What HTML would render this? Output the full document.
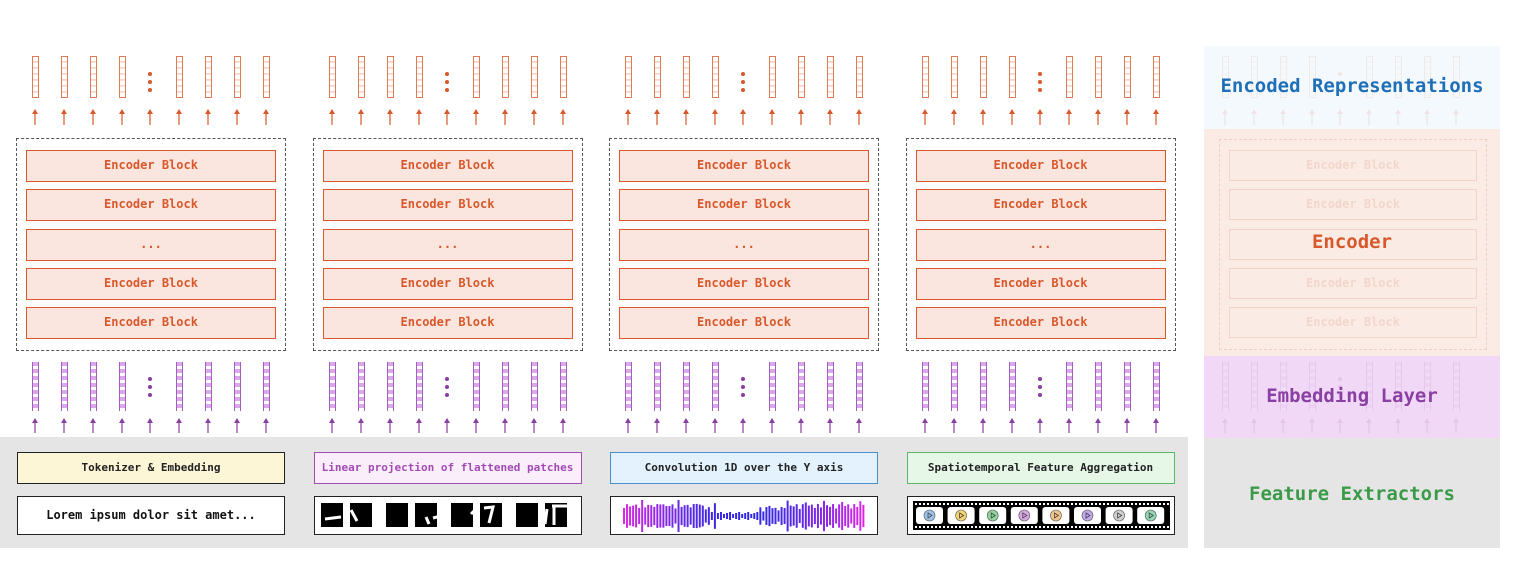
<!DOCTYPE html>
<html><head><meta charset="utf-8">
<style>
*{margin:0;padding:0;box-sizing:border-box}
body{width:1527px;height:563px;background:#fff;position:relative;overflow:hidden;font-family:"DejaVu Sans Mono","Liberation Mono",monospace}
.a{position:absolute}
.gray{left:0;top:437px;width:1188px;height:111px;background:#e5e5e5}
.dash{border:1px dashed #555}
.blk{border:1.5px solid #d9582b;background:#fbe6df;color:#d9582b;font-size:12px;font-weight:bold;text-align:center;line-height:29px}
.vt{width:7px;border:1px solid #e07a55;background:repeating-linear-gradient(#fff 0 4px,#f7d5c8 4px 5px,#fbe3da 5px 6px)}
.vb{width:7px;border-left:1px solid #a75cc0;border-right:1px solid #a75cc0;background:repeating-linear-gradient(#d9a8e8 0 4px,#fff 4px 7px)}
.hd{height:32px;border:1.5px solid;font-size:11px;font-weight:bold;text-align:center;line-height:29px;color:#222}
.in{height:39px;border:1.5px solid #222;background:#fff}
.dot{width:4px;height:4px;border-radius:2px}
.rt{font-size:19px;font-weight:bold;text-align:center;width:296px;left:1204px}
</style></head><body>
<div class="a gray"></div>
<div class="a" style="left:1204px;top:46px;width:296px;height:83px;background:#f3f9fd"></div>
<div class="a" style="left:1204px;top:129px;width:296px;height:227px;background:#fbebe5"></div>
<div class="a" style="left:1204px;top:356px;width:296px;height:82px;background:#f0d8f6"></div>
<div class="a" style="left:1204px;top:438px;width:296px;height:110px;background:#e5e5e5"></div>
<div class="a" style="left:1219px;top:139px;width:268px;height:211px;border:1px dashed #f0cfc3"></div>
<div id="g"></div>
<div class="a rt" style="top:75px;color:#1f6fb8">Encoded Representations</div>
<div class="a rt" style="top:231px;color:#d9582b">Encoder</div>
<div class="a rt" style="top:385px;color:#8a3fa3">Embedding Layer</div>
<div class="a rt" style="top:483px;color:#3a9a48">Feature Extractors</div>
<script>
var h='';
var cols=[35,64,93,122,179,208,237,266];
function panel(o,faint){
  var op=faint?'opacity:.12;':'';
  cols.forEach(function(c){
    var x=o+c-3;
    h+='<div class="a vt" style="'+op+'left:'+x+'px;top:56px;height:42px"></div>';
    h+='<div class="a vb" style="'+op+'left:'+x+'px;top:362px;height:49px"></div>';
  });
  cols.concat([150]).forEach(function(c){
    var x=o+c;
    h+='<svg class="a" style="'+op+'left:'+(x-4)+'px;top:108px" width="8" height="17"><path d="M4 17V2" stroke="#d9582b" stroke-width="1.2"/><path d="M1 6L4 1 7 6Z" fill="#d9582b"/></svg>';
    h+='<svg class="a" style="'+op+'left:'+(x-4)+'px;top:417px" width="8" height="16"><path d="M4 16V2" stroke="#8a3fa3" stroke-width="1.2"/><path d="M1 6L4 1 7 6Z" fill="#8a3fa3"/></svg>';
  });
  [72,80,88].forEach(function(y){h+='<div class="a dot" style="'+op+'left:'+(o+148)+'px;top:'+y+'px;background:#d9582b"></div>'});
  [377,385,393].forEach(function(y){h+='<div class="a dot" style="'+op+'left:'+(o+148)+'px;top:'+y+'px;background:#8a3fa3"></div>'});
  if(!faint){
    h+='<div class="a dash" style="left:'+(o+16)+'px;top:138px;width:270px;height:213px"></div>';
    var ys=[150,189,229,268,307],t=['Encoder Block','Encoder Block','...','Encoder Block','Encoder Block'];
    ys.forEach(function(y,i){h+='<div class="a blk" style="left:'+(o+26)+'px;top:'+y+'px;width:250px;height:32px">'+t[i]+'</div>'});
  }
}
for(var i=0;i<4;i++)panel(i*296.5,false);
panel(1190,true);
var rys=[150,189,229,268,307];
rys.forEach(function(y){h+='<div class="a" style="left:1229px;top:'+y+'px;width:248px;height:31px;border:1px solid #f3d3c7;color:#f3d6cb;font-size:12px;font-weight:bold;text-align:center;line-height:29px">'+(y==229?'':'Encoder Block')+'</div>'});
var hd=[['Tokenizer &amp; Embedding','#fdf6d6','#222','#222'],['Linear projection of flattened patches','#faeefb','#a24bb5','#a24bb5'],['Convolution 1D over the Y axis','#e3f2fc','#4a90d0','#222'],['Spatiotemporal Feature Aggregation','#e6f7e8','#5bb66a','#222']];
hd.forEach(function(d,i){var o=i*296.5;
  h+='<div class="a hd" style="left:'+(o+17)+'px;top:452px;width:268px;background:'+d[1]+';border-color:'+d[2]+';color:'+d[3]+'">'+d[0]+'</div>';
  h+='<div class="a in" style="left:'+(o+17)+'px;top:496px;width:268px"></div>';
});
h+='<div class="a" style="left:17px;top:496px;width:268px;line-height:39px;text-align:center;font-size:12px;font-weight:bold;color:#111">Lorem ipsum dolor sit amet...</div>';
for(var k=0;k<8;k++){
 h+='<div class="a" style="left:'+(321+Math.floor(k/2)*65+(k%2)*29)+'px;top:503px;width:22px;height:24px;background:#000"></div>';}
h+='<svg class="a" style="left:321px;top:503px" width="260" height="24"><path d="M4 16L20 14M30 7L36 18M105 14L108 21M112 15L120 13M150 11L155 6M163 5L172 4 168 20M226 6L224 21M231 3L249 3M233 3L233 22" stroke="#fff" stroke-width="3" fill="none"/></svg>';
var s='<svg class="a" style="left:620px;top:500px" width="250" height="32">';
for(var j=0;j<80;j++){var x=4+j*3.03;var t=j/79;var amp=4+Math.abs(Math.sin(j*1.3))*5+ (j%6==0?4:0)+ (Math.sin(t*Math.PI*3)>0?3:0);if(j>30&&j<45)amp=2+(j%3);
 var r=Math.round(220-170*Math.sin(t*Math.PI)),b=230;var c='rgb('+r+',40,'+b+')';
 s+='<line x1="'+x+'" x2="'+x+'" y1="'+(16-amp)+'" y2="'+(16+amp)+'" stroke="'+c+'" stroke-width="2"/>';}
s+='</svg>';h+=s;
var f='<svg class="a" style="left:913px;top:501px" width="257" height="29"><rect width="257" height="29" fill="#000"/>';
for(var j=0;j<64;j++){f+='<rect x="'+(2+j*4)+'" y="2" width="2" height="2" fill="#fff"/><rect x="'+(2+j*4)+'" y="25" width="2" height="2" fill="#fff"/>';}
var cl=['#9cc3ea','#f3d36e','#8fd49c','#d8a6e4','#f4c488','#c4a8ec','#cfcfcf','#8fd8b4'];
for(var j=0;j<8;j++){var x=3+j*31.6;f+='<rect x="'+x+'" y="6" width="27" height="17" rx="3" fill="#fff"/><circle cx="'+(x+13.5)+'" cy="14.5" r="5.5" fill="'+cl[j]+'" stroke="#555" stroke-width=".6"/><path d="M'+(x+12)+' 12L'+(x+16)+' 14.5 '+(x+12)+' 17Z" fill="none" stroke="#444" stroke-width=".8"/>';}
f+='</svg>';h+=f;
document.getElementById('g').innerHTML=h;
</script>
</body></html>
